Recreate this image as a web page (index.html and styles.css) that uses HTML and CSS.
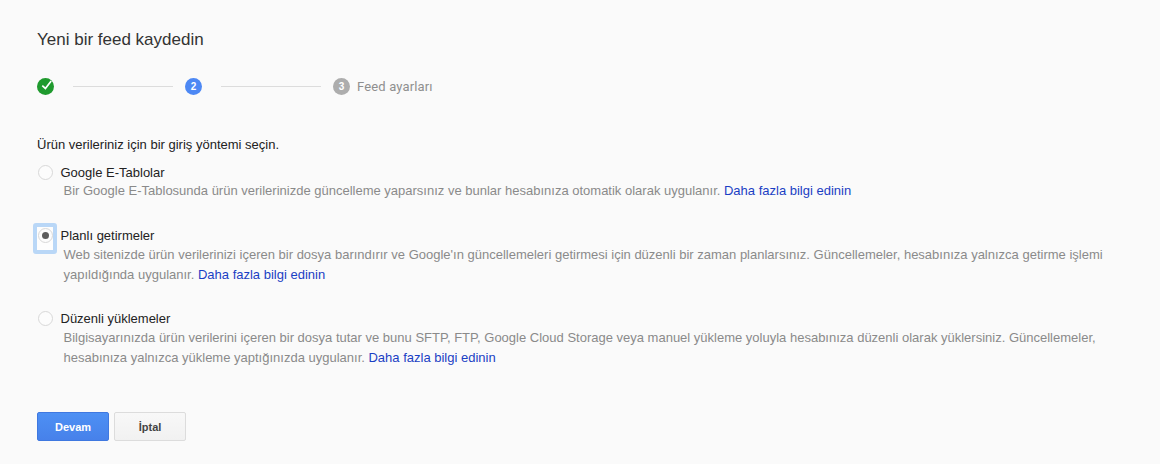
FILE: index.html
```html
<!DOCTYPE html>
<html lang="tr">
<head>
<meta charset="utf-8">
<title>Yeni bir feed kaydedin</title>
<link rel="stylesheet" href="styles.css">
</head>
<body>
<main class="page">
  <h1 class="title">Yeni bir feed kaydedin</h1>
  <div class="stepper">
    <span class="dot done">
      <svg width="18" height="18" viewBox="0 0 18 18"><path d="M5.6 8.6 8.9 11.6 15 3.6" fill="none" stroke="#fff" stroke-width="1.8"/></svg>
    </span>
    <span class="line"></span>
    <span class="dot active">2</span>
    <span class="line"></span>
    <span class="dot todo">3</span>
    <span class="step-label">Feed ayarları</span>
  </div>
  <p class="intro">Ürün verileriniz için bir giriş yöntemi seçin.</p>
  <div class="options">
    <div class="option">
      <span class="radio-wrap"><span class="radio"></span></span>
      <div class="option-text">
        <div class="option-name">Google E-Tablolar</div>
        <div class="option-desc">Bir Google E-Tablosunda ürün verilerinizde güncelleme yaparsınız ve bunlar hesabınıza otomatik olarak uygulanır. <a href="#">Daha fazla bilgi edinin</a></div>
      </div>
    </div>
    <div class="option">
      <span class="radio-wrap focused"><span class="radio checked"></span></span>
      <div class="option-text">
        <div class="option-name">Planlı getirmeler</div>
        <div class="option-desc">Web sitenizde ürün verilerinizi içeren bir dosya barındırır ve Google'ın güncellemeleri getirmesi için düzenli bir zaman planlarsınız. Güncellemeler, hesabınıza yalnızca getirme işlemi yapıldığında uygulanır. <a href="#">Daha fazla bilgi edinin</a></div>
      </div>
    </div>
    <div class="option">
      <span class="radio-wrap"><span class="radio"></span></span>
      <div class="option-text">
        <div class="option-name">Düzenli yüklemeler</div>
        <div class="option-desc">Bilgisayarınızda ürün verilerini içeren bir dosya tutar ve bunu SFTP, FTP, Google Cloud Storage veya manuel yükleme yoluyla hesabınıza düzenli olarak yüklersiniz. Güncellemeler, hesabınıza yalnızca yükleme yaptığınızda uygulanır. <a href="#">Daha fazla bilgi edinin</a></div>
      </div>
    </div>
  </div>
  <div class="actions">
    <button class="btn primary">Devam</button>
    <button class="btn">İptal</button>
  </div>
</main>
</body>
</html>
```
FILE: styles.css
```css
*, *::before, *::after { box-sizing: border-box; }
html, body { margin: 0; height: 100%; }
body { background: #fafafa; font-family: "Liberation Sans", Arial, sans-serif; color: #222; overflow: hidden; }
.page { padding: 29px 37px 0; }
.title { margin: 0; font-size: 17px; line-height: 22px; font-weight: 400; color: #333; }
.stepper { display: flex; align-items: center; margin-top: 25px; height: 20px; }
.dot { width: 17px; height: 17px; border-radius: 50%; display: flex; align-items: center; justify-content: center; color: #fff; font-size: 10px; font-weight: 700; flex: none; }
.dot.done { background: #1f9a2e; }
.dot.active { background: #4d88f4; }
.dot.todo { background: #adadad; }
.line { width: 100px; height: 1px; background: #dcdcdc; margin: 0 12px 0 19px; }
.step-label { font-family: Roboto, "Liberation Sans", sans-serif; margin-left: 7px; font-size: 13px; letter-spacing: .15px; color: #8f8f8f; }
.intro { margin: 40px 0 0; font-size: 13px; line-height: 17px; color: #222; }
.options { margin-top: 11px; display: flex; flex-direction: column; gap: 25px; }
.option { display: flex; }
.option:first-child { margin-bottom: 1px; }
.radio-wrap { width: 23.5px; height: 17px; flex: none; display: flex; align-items: center; position: relative; }
.radio { width: 15px; height: 15px; margin-left: 1px; border: 1px solid #d8d8d8; border-radius: 50%; background: #fcfcfc; display: block; position: relative; z-index: 1; }
.radio.checked::after { content: ""; position: absolute; left: 3px; top: 3px; width: 7px; height: 7px; border-radius: 50%; background: #5c5c5c; }
.focused::before { content: ""; position: absolute; left: -4px; top: -4px; width: 24px; height: 31px; border: 4px solid #b9d7f7; border-radius: 3px; background: #fdfdfd; }
.option-name { font-size: 13px; line-height: 17px; color: #222; }
.option-desc { font-size: 13px; line-height: 20px; color: #8a8a8a; padding-left: 3px; margin-top: 1px; max-width: 1050px; }
.option:first-child .option-desc { margin-top: 0; }
.option-desc a { color: #1a3fc4; text-decoration: none; }
.actions { display: flex; gap: 5px; margin-top: 44px; }
.btn { width: 72px; height: 29px; border: 1px solid #dcdcdc; border-radius: 2px; background: linear-gradient(#f8f8f8, #f1f1f1); font: 700 11px "Liberation Sans", Arial, sans-serif; color: #444; }
.btn.primary { background: linear-gradient(#4d90f4, #4781ea); border-color: #3f78e0; color: #fff; }
```
